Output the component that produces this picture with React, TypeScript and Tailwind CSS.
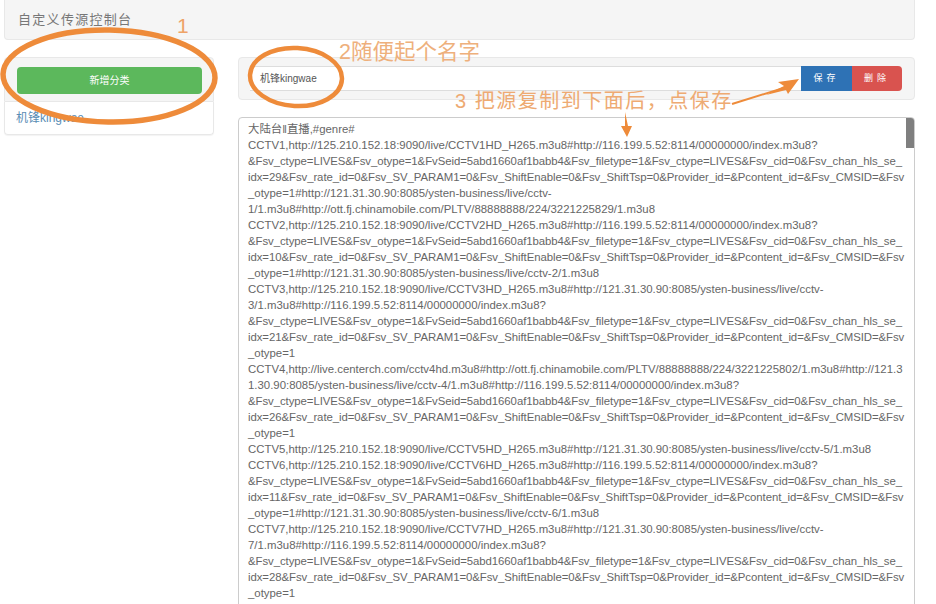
const lines = [
  '大陆台‖直播,#genre#',
  'CCTV1,http://125.210.152.18:9090/live/CCTV1HD_H265.m3u8#http://116.199.5.52:8114/00000000/index.m3u8?',
  '&Fsv_ctype=LIVES&Fsv_otype=1&FvSeid=5abd1660af1babb4&Fsv_filetype=1&Fsv_ctype=LIVES&Fsv_cid=0&Fsv_chan_hls_se_',
  'idx=29&Fsv_rate_id=0&Fsv_SV_PARAM1=0&Fsv_ShiftEnable=0&Fsv_ShiftTsp=0&Provider_id=&Pcontent_id=&Fsv_CMSID=&Fsv',
  '_otype=1#http://121.31.30.90:8085/ysten-business/live/cctv-',
  '1/1.m3u8#http://ott.fj.chinamobile.com/PLTV/88888888/224/3221225829/1.m3u8',
  'CCTV2,http://125.210.152.18:9090/live/CCTV2HD_H265.m3u8#http://116.199.5.52:8114/00000000/index.m3u8?',
  '&Fsv_ctype=LIVES&Fsv_otype=1&FvSeid=5abd1660af1babb4&Fsv_filetype=1&Fsv_ctype=LIVES&Fsv_cid=0&Fsv_chan_hls_se_',
  'idx=10&Fsv_rate_id=0&Fsv_SV_PARAM1=0&Fsv_ShiftEnable=0&Fsv_ShiftTsp=0&Provider_id=&Pcontent_id=&Fsv_CMSID=&Fsv',
  '_otype=1#http://121.31.30.90:8085/ysten-business/live/cctv-2/1.m3u8',
  'CCTV3,http://125.210.152.18:9090/live/CCTV3HD_H265.m3u8#http://121.31.30.90:8085/ysten-business/live/cctv-',
  '3/1.m3u8#http://116.199.5.52:8114/00000000/index.m3u8?',
  '&Fsv_ctype=LIVES&Fsv_otype=1&FvSeid=5abd1660af1babb4&Fsv_filetype=1&Fsv_ctype=LIVES&Fsv_cid=0&Fsv_chan_hls_se_',
  'idx=21&Fsv_rate_id=0&Fsv_SV_PARAM1=0&Fsv_ShiftEnable=0&Fsv_ShiftTsp=0&Provider_id=&Pcontent_id=&Fsv_CMSID=&Fsv',
  '_otype=1',
  'CCTV4,http://live.centerch.com/cctv4hd.m3u8#http://ott.fj.chinamobile.com/PLTV/88888888/224/3221225802/1.m3u8#http://121.3',
  '1.30.90:8085/ysten-business/live/cctv-4/1.m3u8#http://116.199.5.52:8114/00000000/index.m3u8?',
  '&Fsv_ctype=LIVES&Fsv_otype=1&FvSeid=5abd1660af1babb4&Fsv_filetype=1&Fsv_ctype=LIVES&Fsv_cid=0&Fsv_chan_hls_se_',
  'idx=26&Fsv_rate_id=0&Fsv_SV_PARAM1=0&Fsv_ShiftEnable=0&Fsv_ShiftTsp=0&Provider_id=&Pcontent_id=&Fsv_CMSID=&Fsv',
  '_otype=1',
  'CCTV5,http://125.210.152.18:9090/live/CCTV5HD_H265.m3u8#http://121.31.30.90:8085/ysten-business/live/cctv-5/1.m3u8',
  'CCTV6,http://125.210.152.18:9090/live/CCTV6HD_H265.m3u8#http://116.199.5.52:8114/00000000/index.m3u8?',
  '&Fsv_ctype=LIVES&Fsv_otype=1&FvSeid=5abd1660af1babb4&Fsv_filetype=1&Fsv_ctype=LIVES&Fsv_cid=0&Fsv_chan_hls_se_',
  'idx=11&Fsv_rate_id=0&Fsv_SV_PARAM1=0&Fsv_ShiftEnable=0&Fsv_ShiftTsp=0&Provider_id=&Pcontent_id=&Fsv_CMSID=&Fsv',
  '_otype=1#http://121.31.30.90:8085/ysten-business/live/cctv-6/1.m3u8',
  'CCTV7,http://125.210.152.18:9090/live/CCTV7HD_H265.m3u8#http://121.31.30.90:8085/ysten-business/live/cctv-',
  '7/1.m3u8#http://116.199.5.52:8114/00000000/index.m3u8?',
  '&Fsv_ctype=LIVES&Fsv_otype=1&FvSeid=5abd1660af1babb4&Fsv_filetype=1&Fsv_ctype=LIVES&Fsv_cid=0&Fsv_chan_hls_se_',
  'idx=28&Fsv_rate_id=0&Fsv_SV_PARAM1=0&Fsv_ShiftEnable=0&Fsv_ShiftTsp=0&Provider_id=&Pcontent_id=&Fsv_CMSID=&Fsv',
  '_otype=1',
]

const font = "font-['Liberation_Sans','Noto_Sans_CJK_SC',sans-serif]"

export default function App() {
  return (
    <div className={`relative w-[936px] h-[604px] overflow-hidden bg-white text-[#555] ${font}`}>
      <div className="flex flex-col pl-1 pr-[21px]">
        <div className="h-10 flex items-center px-[13px] bg-[#f5f5f5] border border-t-0 border-[#e8e8e8] rounded-b text-[13px] text-[#777] tracking-[1.3px]">
          自定义传源控制台
        </div>

        <div className="flex mt-[17px] gap-6">
          <div className="w-[210px] shrink-0">
            <div className="h-[45px] px-[12px] pt-[9px] bg-[#f5f5f5] border border-[#e8e8e8] rounded-t">
              <button className="w-[185px] h-[27px] bg-[#5cb85c] rounded-sm text-white text-[10px]">新增分类</button>
            </div>
            <div className="h-[33px] flex items-center px-[11px] border border-t-0 border-[#e8e8e8] rounded-b text-[12px] text-[#5a8db5] shadow-[0_1px_1px_rgba(0,0,0,0.05)]">
              机锋kingwae
            </div>
          </div>

          <div className="flex-1 min-w-0">
            <div className="h-[43px] flex items-start pl-[11px] pr-3 pt-2 bg-[#f5f5f5] border border-[#e8e8e8] rounded">
              <div className="flex-1 h-[25px] flex items-center pl-[10px] bg-white border-y border-[#ddd] text-[10px] text-[#555]">
                机锋kingwae
              </div>
              <button className="w-[51px] h-[25px] bg-[#2e72b5] text-white text-[9px] tracking-[4px]">保存</button>
              <button className="w-[50px] h-[25px] bg-[#d9534f] rounded-r text-white text-[9px] tracking-[4px]">删除</button>
            </div>

            <div className="relative mt-[17px] h-[500px] pl-[9px] pt-[3px] border border-[#ccc] rounded-sm text-[11.4px] leading-[16px] text-[#666] overflow-hidden">
              {lines.map((line, i) => (
                <div
                  key={i}
                  className={line.startsWith('&') || line.startsWith('idx') ? 'whitespace-nowrap tracking-[-0.07px]' : 'whitespace-nowrap'}
                >
                  {line}
                </div>
              ))}
              <div className="absolute right-0 top-0 w-2 h-[30px] bg-[#7f7f7f]" />
            </div>
          </div>
        </div>
      </div>

      {/* annotations drawn over the page */}
      <svg className="absolute left-0 top-0 pointer-events-none" width="936" height="604" viewBox="0 0 936 604" fill="none">
        <ellipse cx="109" cy="76" rx="106" ry="46" stroke="#ee8b3a" strokeWidth="5.5" transform="rotate(1 109 76)" />
        <ellipse cx="296" cy="77" rx="46" ry="29" stroke="#ee8b3a" strokeWidth="4.5" transform="rotate(3 296 77)" />
        <path d="M732 104 L790 86" stroke="#ee8b3a" strokeWidth="2" />
        <path d="M799 79 L778 82 L784 86 L766 95 L786 90 L788 94 Z" fill="#ee8b3a" />
        <path d="M625 112 L628 126 L632 126 L627 137 L621 126 L625 126 Z" fill="#ee8b3a" />
      </svg>
      <span className="absolute left-[177px] top-[13px] text-[21px] leading-[26px] text-[#eea368]">1</span>
      <span className="absolute left-[339px] top-[39px] text-[21.5px] leading-[26px] text-[#eeb07c] whitespace-nowrap">2随便起个名字</span>
      <span className="absolute left-[455px] top-[88px] text-[20px] leading-[26px] text-[#eeaa72] whitespace-nowrap tracking-[1.5px]">3 把源复制到下面后，点保存</span>
    </div>
  )
}
